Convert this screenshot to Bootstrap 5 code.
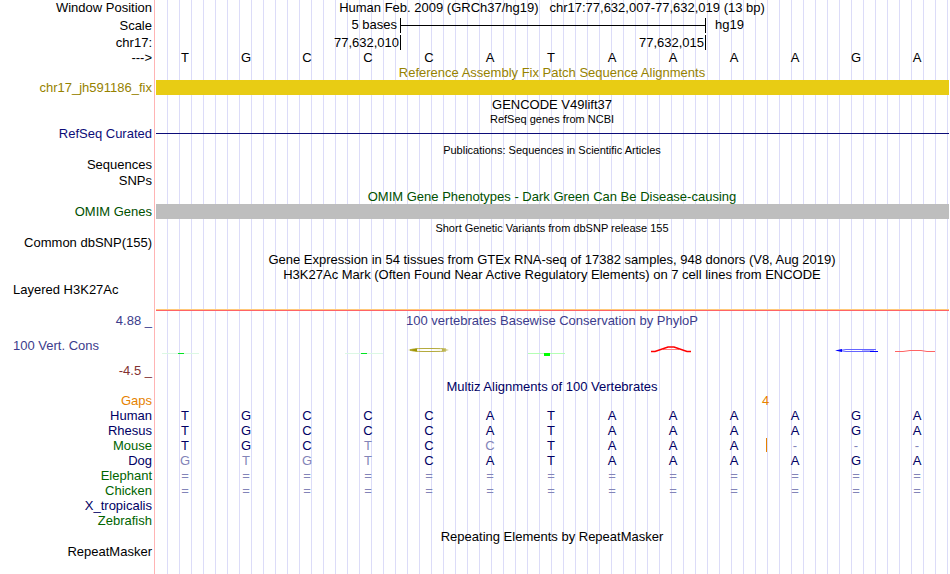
<!DOCTYPE html>
<html lang="en">
<head>
<meta charset="utf-8">
<meta name="viewport" content="width=device-width, initial-scale=1">
<title>Human hg19 chr17:77,632,007-77,632,019</title>
<link href="https://cdn.jsdelivr.net/npm/bootstrap@5.3.0/dist/css/bootstrap.min.css" rel="stylesheet">
<style>
body { font: 13px/15px "Liberation Sans", Arial, Helvetica, sans-serif; color: #000; background: #fff; }
.browser {
  margin-right: 1px; min-height: 100vh;
  background:
    linear-gradient(#ffb4b4, #ffb4b4) 154px 0 / 1px 100% no-repeat,
    repeating-linear-gradient(90deg, transparent 0 11px, #dcdcf8 11px 12px) 156px 0 / 100% 100% no-repeat;
}
.trk { display: grid; grid-template-columns: 156px minmax(0, 1fr); min-height: 15px; }
.lbl { padding-right: 4px; text-align: right; white-space: nowrap; }
.lbl.wide { padding-left: 13px; text-align: left; }
.ttl { padding-right: 1px; text-align: center; white-space: pre; }
.fine { font-size: 11px; line-height: 14px; }
.trk.thin { min-height: 14px; }
.h-16 { min-height: 16px; }
.h-17 { min-height: 17px; }
.h-18 { min-height: 18px; }
.h-31 { min-height: 31px; }
.h-32 { min-height: 32px; }
.bases { display: grid; grid-template-columns: repeat(13, minmax(0, 1fr)); }
.bases b { font-weight: 400; text-align: center; padding-right: 3px; }
.c1-4 { grid-column: 1 / 5; padding-right: 3px; }
.c5-9 { grid-column: 5 / 10; padding-right: 3px; }
.c10-13 { grid-column: 10 / 14; padding-left: 10px; }
.position .c1-4, .position .c5-9 { padding-right: 1px; }
.tick { border-left: 1px solid #000; }
.ruler { border: solid #000; border-width: 0 1px; margin-right: -1px; height: 15px; margin-top: 1px; }
.ruler::before { content: ""; display: block; height: 8px; border-bottom: 1px solid #000; margin-right: -3px; }
.fix { color: #968200; }
.fixbar { background: #e8cc14; }
.refseq { color: #0c0c78; }
.refline { height: 1px; background: #0c0c78; }
.omim { color: #005000; }
.omimbar { background: #bebebe; }
.clip { border-top: 1px solid #ffc878; border-bottom: 1px solid #ff6464; height: 2px; margin-bottom: 2px; }
.pos { color: #3c3c8c; }
.neg { color: #823232; }
.multiz { color: #000064; }
.aln { table-layout: fixed; width: 100%; border-collapse: separate; border-spacing: 0; line-height: 14px; }
.aln th, .aln td { height: 15px; padding: 0 3px 0 0; font-weight: 400; text-align: center; color: #000064; }
.aln th { padding-right: 4px; text-align: right; }
.aln .gaprow th, .aln .gaprow td { height: 14px; }
.aln col:first-child { width: 156px; }
.aln .alt { color: #006400; }
.aln .diff { color: #8284b8; }
.aln .gap { color: #e68200; }
.aln td.gap { padding-right: 1px; }
.aln .ins { background: linear-gradient(#e68200, #e68200) 0 0 / 1px 14px no-repeat; }
</style>
</head>
<body>
<main class="browser">
  <div class="trk h-16"><div class="lbl">Window Position</div><div class="ttl">Human Feb. 2009 (GRCh37/hg19)   chr17:77,632,007-77,632,019 (13 bp)</div></div>
  <div class="trk h-18 align-items-center"><div class="lbl">Scale</div>
    <div class="bases"><span class="c1-4 text-end">5 bases</span><span class="c5-9 ruler"></span><span class="c10-13">hg19</span></div></div>
  <div class="trk h-16 align-items-end position"><div class="lbl">chr17:</div>
    <div class="bases"><span class="c1-4 text-end">77,632,010</span><span class="c5-9 text-end tick">77,632,015</span><span class="c10-13 tick"></span></div></div>
  <div class="trk"><div class="lbl">---&gt;</div>
    <div class="bases" id="reference-bases"></div></div>
  <div class="trk fix"><div></div><div class="ttl">Reference Assembly Fix Patch Sequence Alignments</div></div>
  <div class="trk fix"><div class="lbl">chr17_jh591186_fix</div><div class="fixbar"></div></div>
  <div class="trk h-17 align-items-end"><div></div><div class="ttl">GENCODE V49lift37</div></div>
  <div class="trk thin"><div></div><div class="ttl fine">RefSeq genes from NCBI</div></div>
  <div class="trk refseq align-items-center"><div class="lbl">RefSeq Curated</div><div class="refline"></div></div>
  <div class="trk h-16 align-items-end"><div></div><div class="ttl fine">Publications: Sequences in Scientific Articles</div></div>
  <div class="trk h-16"><div class="lbl">Sequences</div></div>
  <div class="trk h-16"><div class="lbl">SNPs</div></div>
  <div class="trk omim"><div></div><div class="ttl">OMIM Gene Phenotypes - Dark Green Can Be Disease-causing</div></div>
  <div class="trk omim"><div class="lbl">OMIM Genes</div><div class="omimbar"></div></div>
  <div class="trk h-16 align-items-end"><div></div><div class="ttl fine">Short Genetic Variants from dbSNP release 155</div></div>
  <div class="trk h-17"><div class="lbl">Common dbSNP(155)</div></div>
  <div class="trk"><div></div><div class="ttl">Gene Expression in 54 tissues from GTEx RNA-seq of 17382 samples, 948 donors (V8, Aug 2019)</div></div>
  <div class="trk"><div></div><div class="ttl">H3K27Ac Mark (Often Found Near Active Regulatory Elements) on 7 cell lines from ENCODE</div></div>
  <div class="trk h-31"><div class="lbl wide">Layered H3K27Ac</div><div class="clip align-self-end"></div></div>
  <div class="trk h-16 pos"><div class="lbl">4.88 _</div><div class="ttl">100 vertebrates Basewise Conservation by PhyloP</div></div>
  <div class="trk h-32 pos align-items-center"><div class="lbl wide">100 Vert. Cons</div>
    <svg width="100%" height="32" viewBox="0 0 793 32" preserveAspectRatio="none" role="img" aria-label="PhyloP scores per base">
      <path d="M6 24.5H43M189 24.5H227" stroke="#dcf8e4"/>
      <path d="M372 24.5H409" stroke="#b4ffb4"/>
      <path d="M22 24.5H28M205 24.5H211" stroke="#00e620"/>
      <path d="M388 24H394V27H388Z" fill="#00ff00"/>
      <path d="M290 20Q286 19.5 276 19.5H268Q256 19.5 254 21Q256 22.5 268 22.5H276Q286 22.5 290 22" fill="none" stroke="#b4aa3c"/>
      <path d="M252 21L261 19.5V22.5Z" fill="#a09600"/>
      <path d="M286 19.5L293 21L286 22.5Z" fill="#bcb450"/>
      <path d="M507 20.5H523" stroke="#ff8080"/>
      <path d="M495 22.5H499L512 18H518L531 22.5H535" fill="none" stroke="#ff0000" stroke-width="1.6"/>
      <path d="M720 20.5H690L683 21.5L690 22.5H721" fill="none" stroke="#6464ff"/>
      <path d="M706 21.5H718" stroke="#b4b4ff"/>
      <path d="M679 21.5L686 20V23ZM714 22H722V23H714Z" fill="#0000ff"/>
      <path d="M739 22.5H747L754 21.5H765L771 22.5H779" fill="none" stroke="#ff6464"/>
    </svg></div>
  <div class="trk h-17 neg align-items-end"><div class="lbl">-4.5 _</div></div>
  <div class="trk h-16 multiz align-items-end"><div></div><div class="ttl">Multiz Alignments of 100 Vertebrates</div></div>
  <table class="aln" aria-label="Multiz alignment">
    <colgroup><col><col span="13"></colgroup>
    <tbody id="alignment">
      <tr class="gaprow"><th scope="row" class="gap">Gaps</th><td colspan="9"></td><td colspan="2" class="gap">4</td><td colspan="2"></td></tr>
    </tbody>
  </table>
  <div class="trk h-16 align-items-end"><div></div><div class="ttl">Repeating Elements by RepeatMasker</div></div>
  <div class="trk"><div class="lbl">RepeatMasker</div></div>
</main>
<script>
const reference = "TGCCCATAAAAGA";
document.getElementById("reference-bases").innerHTML = [...reference].map(c => `<b>${c}</b>`).join("");
const species = [
  ["Human", reference],
  ["Rhesus", reference],
  ["Mouse", "TGCTCCTAAA---", true, 10],
  ["Dog", "GTGTCATAAAAGA"],
  ["Elephant", "=============", true],
  ["Chicken", "=============", true],
  ["X_tropicalis", "             "],
  ["Zebrafish", "             ", true]
];
document.getElementById("alignment").insertAdjacentHTML("beforeend", species.map(([name, seq, alt, insert]) =>
  `<tr><th scope="row" class="${alt ? "alt" : ""}">${name}</th>` + [...seq].map((c, i) =>
    `<td class="${c !== reference[i] ? "diff" : ""} ${i === insert ? "ins" : ""}">${c}</td>`).join("") + "</tr>").join(""));
</script>
<script src="https://cdn.jsdelivr.net/npm/bootstrap@5.3.0/dist/js/bootstrap.bundle.min.js"></script>
</body>
</html>
